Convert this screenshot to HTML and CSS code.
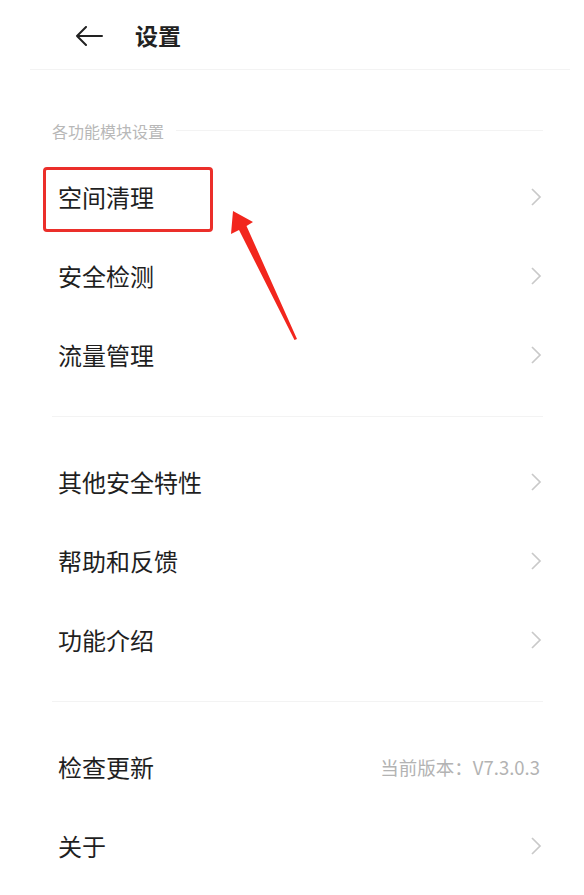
FILE: index.html
```html
<!DOCTYPE html>
<html lang="zh-CN">
<head>
    <meta charset="UTF-8">
    <meta name="viewport" content="width=device-width, initial-scale=1.0">
    <title>设置</title>
    <link rel="stylesheet" href="styles.css">
</head>
<body>
    <div class="page">
        <header class="top-bar">
            <svg class="back-icon" width="28" height="20" viewBox="0 0 28 20">
                <path d="M27 10 H2 M11 1 L2 10 L11 19" fill="none" stroke="#222" stroke-width="2" stroke-linecap="round" stroke-linejoin="round"/>
            </svg>
            <h1 class="title">设置</h1>
        </header>

        <div class="section-head">
            <span class="section-label">各功能模块设置</span>
            <span class="section-line"></span>
        </div>

        <ul class="menu">
            <li class="menu-item"><span>空间清理</span><span class="chevron"></span></li>
            <li class="menu-item"><span>安全检测</span><span class="chevron"></span></li>
            <li class="menu-item"><span>流量管理</span><span class="chevron"></span></li>
        </ul>

        <div class="divider"></div>

        <ul class="menu">
            <li class="menu-item"><span>其他安全特性</span><span class="chevron"></span></li>
            <li class="menu-item"><span>帮助和反馈</span><span class="chevron"></span></li>
            <li class="menu-item"><span>功能介绍</span><span class="chevron"></span></li>
        </ul>

        <div class="divider"></div>

        <ul class="menu">
            <li class="menu-item"><span>检查更新</span><span class="version">当前版本：V7.3.0.3</span></li>
            <li class="menu-item"><span>关于</span><span class="chevron"></span></li>
        </ul>

        <!-- annotation drawn over the screenshot -->
        <div class="mark-box"></div>
        <svg class="mark-arrow" width="584" height="895" viewBox="0 0 584 895">
            <polygon points="233,211 253,222 246.5,226 297,339 294.5,340 239,230 231,234" fill="#f2261d"/>
        </svg>
    </div>
</body>
</html>
```

FILE: styles.css
```css
/* Base */
body {
    margin: 0;
    background: #fff;
    font-family: "Noto Sans CJK SC", "Noto Sans", sans-serif;
    color: #1f1f1f;
}

.page {
    position: relative;
    width: 584px;
    min-height: 895px;
    overflow: hidden;
}

/* Top bar */
.top-bar {
    display: flex;
    align-items: center;
    height: 70px;
    margin: 0 14px 0 30px;
    padding-left: 45px;
    border-bottom: 1px solid #f3f3f3;
    box-sizing: border-box;
}

.back-icon {
    display: block;
    margin-top: 2px;
}

.title {
    margin: 0 0 0 32px;
    font-size: 23px;
    font-weight: 700;
    color: #222;
}

/* Section header */
.section-head {
    display: flex;
    align-items: flex-start;
    height: 87px;
    padding: 50px 41px 0 52px;
    box-sizing: border-box;
}

.section-label {
    font-size: 16px;
    line-height: 22px;
    color: #b8b8b8;
}

.section-line {
    flex: 1;
    height: 1px;
    margin: 10px 0 0 12px;
    background: #f3f3f3;
}

/* Menu rows */
.menu {
    list-style: none;
    margin: 0;
    padding: 0;
}

.menu-item {
    display: flex;
    align-items: center;
    justify-content: space-between;
    height: 79px;
    padding: 0 42px 0 58px;
    font-size: 24px;
}

.chevron {
    width: 12px;
    height: 20px;
    background: no-repeat center / 12px 20px url("data:image/svg+xml,%3Csvg xmlns='http://www.w3.org/2000/svg' width='12' height='20' viewBox='0 0 12 20'%3E%3Cpath d='M2 2 L10 10 L2 18' fill='none' stroke='%23c9c9c9' stroke-width='1.7'/%3E%3C/svg%3E");
}

.version {
    font-size: 18.5px;
    color: #b3b3b3;
    margin-right: 2px;
}

.divider {
    height: 1px;
    margin: 22px 41px 25px 52px;
    background: #f3f3f3;
}

/* Red annotation */
.mark-box {
    position: absolute;
    left: 43px;
    top: 167px;
    width: 170px;
    height: 65px;
    border: 3px solid #eb2f2a;
    border-radius: 4px;
    box-sizing: border-box;
}

.mark-arrow {
    position: absolute;
    left: 0;
    top: 0;
    pointer-events: none;
}
```
